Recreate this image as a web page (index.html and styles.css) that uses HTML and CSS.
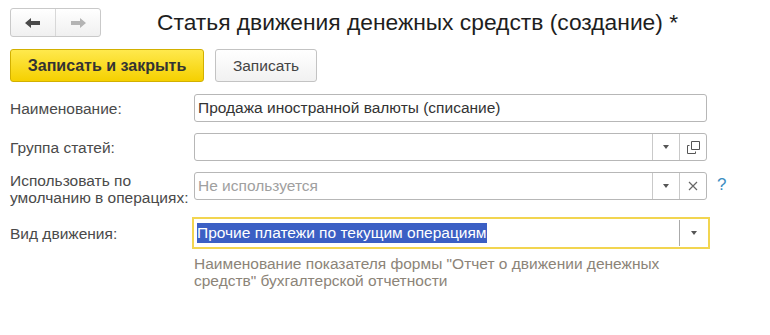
FILE: index.html
```html
<!DOCTYPE html>
<html lang="ru">
<head>
<meta charset="UTF-8" />
<title>Статья движения денежных средств (создание)</title>
<link rel="stylesheet" href="styles.css">
</head>
<body>
<div class="head">
  <div class="nav">
    <span class="nav-btn">
      <svg width="16" height="12" viewBox="0 0 16 12"><path d="M0 6 L6 1 L6 4 L15 4 L15 8 L6 8 L6 11 Z" fill="#4a4a4a"/></svg>
    </span>
    <span class="nav-btn">
      <svg width="16" height="12" viewBox="0 0 16 12"><path d="M16 6 L10 1 L10 4 L1 4 L1 8 L10 8 L10 11 Z" fill="#b4b4b4"/></svg>
    </span>
  </div>
  <h1 class="title">Статья движения денежных средств (создание) *</h1>
</div>

<div class="toolbar">
  <button class="btn btn-main">Записать и закрыть</button>
  <button class="btn">Записать</button>
</div>

<div class="form">
  <label class="lbl">Наименование:</label>
  <div class="field"><span class="val">Продажа иностранной валюты (списание)</span></div>
  <span></span>

  <label class="lbl">Группа статей:</label>
  <div class="field">
    <span class="val"></span>
    <span class="fbtn"><i class="arrow"></i></span>
    <span class="fbtn">
      <svg width="13" height="13" viewBox="0 0 13 13"><path d="M4.5 0.5 H12.5 V8.5 H4.5 Z" fill="none" stroke="#555"/><path d="M2.5 4.5 H0.5 V12.5 H8.5 V10.5" fill="none" stroke="#555"/></svg>
    </span>
  </div>
  <span></span>

  <label class="lbl top">Использовать по умолчанию в операциях:</label>
  <div class="field top">
    <span class="val placeholder">Не используется</span>
    <span class="fbtn"><i class="arrow"></i></span>
    <span class="fbtn">
      <svg width="10" height="10" viewBox="0 0 10 10"><path d="M1 1 L9 9 M9 1 L1 9" stroke="#666" stroke-width="1.2"/></svg>
    </span>
  </div>
  <span class="help top">?</span>

  <label class="lbl">Вид движения:</label>
  <div class="focus">
    <div class="field">
      <span class="val"><span class="sel">Прочие платежи по текущим операциям</span></span>
      <span class="fbtn"><i class="arrow"></i></span>
    </div>
  </div>
  <span></span>

  <span></span>
  <p class="note">Наименование показателя формы "Отчет о движении денежных средств" бухгалтерской отчетности</p>
  <span></span>
</div>
</body>
</html>
```

FILE: styles.css
```css
body { margin: 0; background: #fff; font-family: "Liberation Sans", Arial, sans-serif; color: #4a4a4a; }

.head { display: flex; align-items: center; padding: 8px 0 0 10px; height: 29px; }
.nav { display: flex; width: 89px; height: 27px; border: 1px solid #c9c9c9; border-radius: 3px; background: linear-gradient(#ffffff, #f0f0f0); }
.nav-btn { flex: 1; display: flex; align-items: center; justify-content: center; }
.nav-btn + .nav-btn { border-left: 1px solid #d8d8d8; }
.title { margin: 0 0 0 56px; font-size: 22.8px; font-weight: normal; color: #1e1e1e; }

.toolbar { display: flex; gap: 11px; padding: 12px 0 0 10px; }
.btn { height: 33px; width: 102px; padding: 0; font: 15.5px "Liberation Sans", Arial, sans-serif; color: #444; border: 1px solid #c3c3c3; border-radius: 3px; background: linear-gradient(#ffffff, #f1f1f1); }
.btn-main { width: 194px; font-size: 16px; font-weight: bold; color: #333; border-color: #d2b000; background: linear-gradient(#ffe94d, #f5d000); }

.form { display: grid; grid-template-columns: 184px 513px 30px; align-items: center; row-gap: 11px; padding: 12px 0 0 10px; }
.lbl { font-size: 15.5px; line-height: 17px; color: #4a4a4a; }
.top { align-self: start; }

.field { display: flex; height: 26px; border: 1px solid #b7b7b7; border-radius: 3px; background: #fff; }
.val { flex: 1; display: flex; align-items: center; padding-left: 3px; font-size: 15.5px; color: #333; white-space: nowrap; overflow: hidden; }
.placeholder { color: #a0a0a0; }
.fbtn { width: 26px; display: flex; align-items: center; justify-content: center; border-left: 1px solid #c9c9c9; }
.arrow { width: 0; height: 0; border-left: 3px solid transparent; border-right: 3px solid transparent; border-top: 4px solid #555; }
.help { padding: 3px 0 0 10px; font-size: 17px; color: #3b8ec2; }

.focus { margin-left: -2px; margin-right: -3px; border: 2px solid #f2d550; }
.focus .field { height: 26px; border-color: #fff; border-radius: 0; }
.focus .val { padding-left: 2px; }
.focus .fbtn { border-left-color: #aaa; width: 27px; }
.sel { background: #3b5fc4; color: #fff; line-height: 20px; }

.note { margin: -5px 0 0 0; font-size: 15.5px; line-height: 17px; color: #8c8478; }
```
